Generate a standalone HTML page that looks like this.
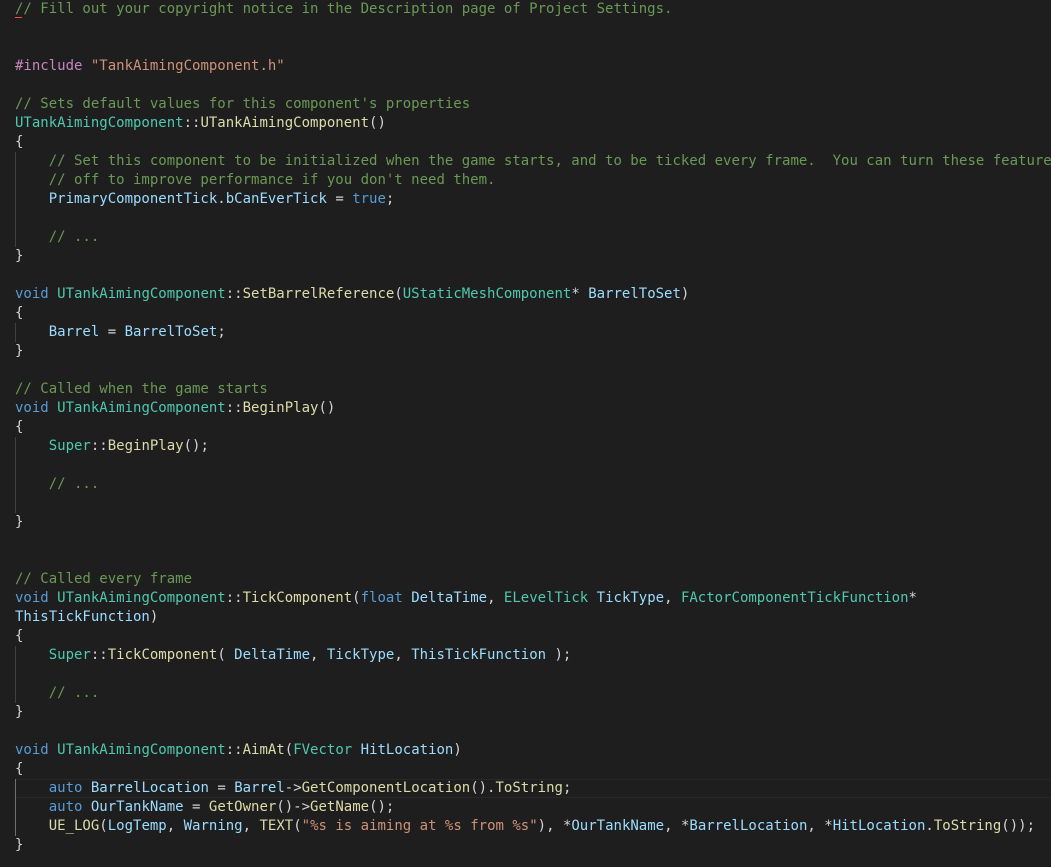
<!DOCTYPE html>
<html><head><meta charset="utf-8"><style>
html,body{margin:0;padding:0;background:#1e1e1e;width:1051px;height:867px;overflow:hidden}
pre{margin:0;position:absolute;left:15px;top:0px;font-family:"DejaVu Sans Mono","Liberation Mono",monospace;font-size:14px;line-height:19px;color:#d4d4d4;white-space:pre}
.c{color:#6a9955}.k{color:#569cd6}.s{color:#ce9178}.f{color:#dcdcaa}.t{color:#4ec9b0}.v{color:#9cdcfe}.p{color:#c586c0}
.g{position:absolute;left:15px;width:1px;background:#404040}
.cur{position:absolute;left:15px;right:0;top:779px;height:17px;border-top:1px solid #282828;border-bottom:1px solid #282828}
.sq{position:absolute;left:15px;top:14px;width:7px;height:3px;border-bottom:1px solid #f14c4c}
</style></head><body>
<div class="cur"></div>
<div class="g" style="top:152px;height:95px"></div>
<div class="g" style="top:323px;height:19px"></div>
<div class="g" style="top:437px;height:76px"></div>
<div class="g" style="top:646px;height:57px"></div>
<div class="g" style="top:779px;height:57px;background:#707070"></div>
<pre><span class="c">// Fill out your copyright notice in the Description page of Project Settings.</span>


<span class="p">#include</span> <span class="s">"TankAimingComponent.h"</span>

<span class="c">// Sets default values for this component's properties</span>
<span class="t">UTankAimingComponent</span>::<span class="f">UTankAimingComponent</span>()
{
    <span class="c">// Set this component to be initialized when the game starts, and to be ticked every frame.  You can turn these features</span>
    <span class="c">// off to improve performance if you don't need them.</span>
    <span class="v">PrimaryComponentTick</span>.<span class="v">bCanEverTick</span> = <span class="k">true</span>;

    <span class="c">// ...</span>
}

<span class="k">void</span> <span class="t">UTankAimingComponent</span>::<span class="f">SetBarrelReference</span>(<span class="t">UStaticMeshComponent</span>* <span class="v">BarrelToSet</span>)
{
    <span class="v">Barrel</span> = <span class="v">BarrelToSet</span>;
}

<span class="c">// Called when the game starts</span>
<span class="k">void</span> <span class="t">UTankAimingComponent</span>::<span class="f">BeginPlay</span>()
{
    <span class="t">Super</span>::<span class="f">BeginPlay</span>();

    <span class="c">// ...</span>

}


<span class="c">// Called every frame</span>
<span class="k">void</span> <span class="t">UTankAimingComponent</span>::<span class="f">TickComponent</span>(<span class="k">float</span> <span class="v">DeltaTime</span>, <span class="t">ELevelTick</span> <span class="v">TickType</span>, <span class="t">FActorComponentTickFunction</span>*
<span class="v">ThisTickFunction</span>)
{
    <span class="t">Super</span>::<span class="f">TickComponent</span>( <span class="v">DeltaTime</span>, <span class="v">TickType</span>, <span class="v">ThisTickFunction</span> );

    <span class="c">// ...</span>
}

<span class="k">void</span> <span class="t">UTankAimingComponent</span>::<span class="f">AimAt</span>(<span class="t">FVector</span> <span class="v">HitLocation</span>)
{
    <span class="k">auto</span> <span class="v">BarrelLocation</span> = <span class="v">Barrel</span>-&gt;<span class="f">GetComponentLocation</span>().<span class="f">ToString</span>;
    <span class="k">auto</span> <span class="v">OurTankName</span> = <span class="f">GetOwner</span>()-&gt;<span class="f">GetName</span>();
    <span class="f">UE_LOG</span>(<span class="v">LogTemp</span>, <span class="v">Warning</span>, <span class="f">TEXT</span>(<span class="s">"%s is aiming at %s from %s"</span>), *<span class="v">OurTankName</span>, *<span class="v">BarrelLocation</span>, *<span class="v">HitLocation</span>.<span class="f">ToString</span>());
}
</pre>
<div class="sq"></div>
</body></html>
